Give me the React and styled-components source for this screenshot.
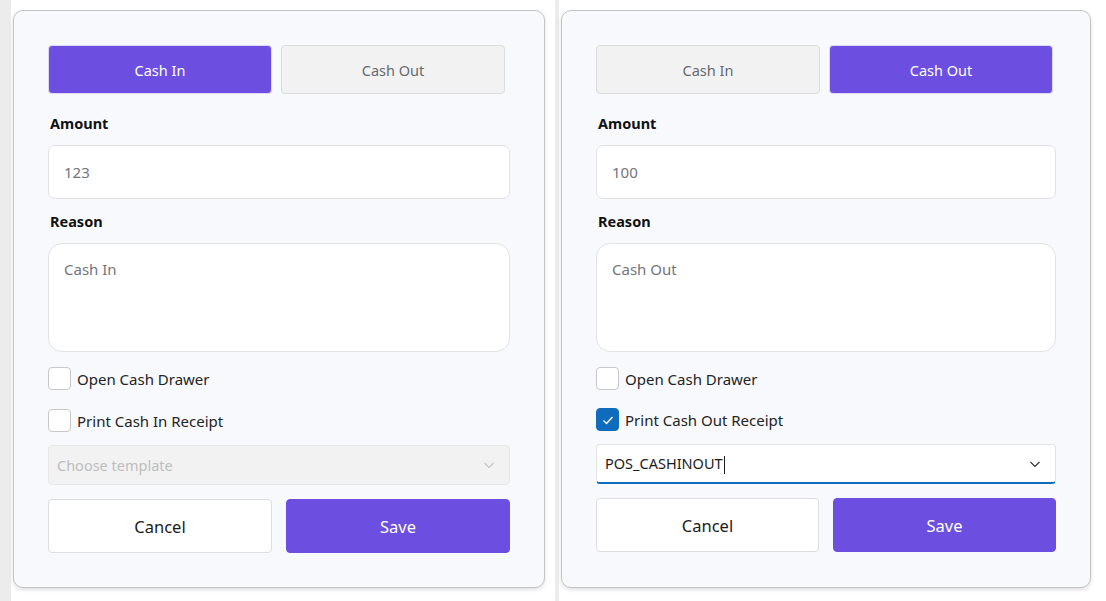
import styled, { createGlobalStyle } from 'styled-components';

const GlobalStyle = createGlobalStyle`
    html, body {
        margin: 0;
        padding: 0;
        background: #ffffff;
    }
    body {
        font-family: 'Noto Sans', 'Open Sans', sans-serif;
        color: #1b1b1b;
    }
`;

const Page = styled.div`
    display: flex;
    width: 1106px;
    height: 601px;
    overflow: hidden;
`;

// one captured window: a grey strip of the app behind, then the dialog
const Shot = styled.div`
    width: ${(props) => props.width}px;
    height: 601px;
    padding: 10px 0 0 ${(props) => props.inset}px;
    box-sizing: border-box;
    background: linear-gradient(
        to right,
        #ececec 0,
        #ececec ${(props) => props.inset - 2}px,
        #ffffff ${(props) => props.inset - 2}px
    );
`;

const Dialog = styled.div`
    width: ${(props) => props.width}px;
    height: 578px;
    box-sizing: border-box;
    padding: 34px 34px 0 34px;
    background: #f8f9fd;
    border: 1px solid #c4c4c4;
    border-radius: 10px;
    box-shadow: 0 2px 4px rgba(0, 0, 0, 0.12);
`;

const Toggles = styled.div`
    display: grid;
    grid-template-columns: 224px 224px;
    gap: 9px;
`;

const Toggle = styled.button`
    height: 49px;
    border-radius: 4px;
    font-family: inherit;
    font-size: 14.5px;
    border: 1px solid ${(props) => (props.active ? '#ddd8f5' : '#dcdcdc')};
    background: ${(props) => (props.active ? '#6c4fe0' : '#f2f2f3')};
    color: ${(props) => (props.active ? '#ffffff' : '#666a70')};
`;

const Label = styled.div`
    margin-top: ${(props) => props.top}px;
    padding-left: 2px;
    font-size: 14.5px;
    font-weight: 700;
    line-height: 20px;
    color: #111;
`;

const Field = styled.div`
    margin-top: 12px;
    height: ${(props) => props.height}px;
    box-sizing: border-box;
    padding: ${(props) => (props.multi ? '15px 15px' : '0 15px')};
    display: flex;
    align-items: ${(props) => (props.multi ? 'flex-start' : 'center')};
    background: #ffffff;
    border: 1px solid #e2e2e6;
    border-radius: ${(props) => (props.multi ? 14 : 7)}px;
    font-size: 15px;
    color: #74747c;
`;

const CheckRow = styled.label`
    margin-top: ${(props) => props.top}px;
    display: flex;
    align-items: center;
    gap: 6px;
    font-size: 15px;
    color: #242424;
`;

const Box = styled.span`
    width: 23px;
    height: 23px;
    box-sizing: border-box;
    border-radius: 4px;
    display: flex;
    align-items: center;
    justify-content: center;
    background: ${(props) => (props.checked ? '#0f6cbd' : '#ffffff')};
    border: 1px solid ${(props) => (props.checked ? '#0f6cbd' : '#c8c8c8')};
`;

const Select = styled.div`
    margin-top: 13px;
    height: 40px;
    box-sizing: border-box;
    padding: 0 14px 0 8px;
    display: flex;
    align-items: center;
    justify-content: space-between;
    border-radius: 4px;
    font-size: 14.5px;
    background: ${(props) => (props.disabled ? '#f2f2f2' : '#ffffff')};
    border: 1px solid ${(props) => (props.disabled ? '#e6e6e6' : '#e2e2e2')};
    border-bottom: ${(props) => (props.disabled ? '1px solid #e6e6e6' : '2px solid #0f6cbd')};
    color: ${(props) => (props.disabled ? '#bdbdbd' : '#1b1b1b')};
`;

const Caret = styled.span`
    display: inline-block;
    width: 1px;
    height: 18px;
    margin-left: 1px;
    background: #1b1b1b;
    vertical-align: middle;
`;

const Actions = styled.div`
    margin-top: 14px;
    display: grid;
    grid-template-columns: 1fr 1fr;
    gap: 14px;
`;

const ActionButton = styled.button`
    height: 54px;
    border-radius: 4px;
    font-family: inherit;
    font-size: 16.5px;
    border: 1px solid ${(props) => (props.primary ? '#6c4fe0' : '#dedede')};
    background: ${(props) => (props.primary ? '#6c4fe0' : '#ffffff')};
    color: ${(props) => (props.primary ? '#ffffff' : '#1b1b1b')};
`;

const Chevron = ({ color }) => (
    <svg width="12" height="12" viewBox="0 0 12 12" fill="none">
        <path d="M1.5 4l4.5 4.5L10.5 4" stroke={color} strokeWidth="1.2" />
    </svg>
);

const Check = () => (
    <svg width="14" height="14" viewBox="0 0 14 14" fill="none">
        <path d="M2.5 7.5l3 3 6-6.5" stroke="#ffffff" strokeWidth="1.4" />
    </svg>
);

const CashDialog = ({ mode, amount, template, width }) => {
    const isIn = mode === 'in';
    const label = isIn ? 'Cash In' : 'Cash Out';
    return (
        <Dialog width={width}>
            <Toggles>
                <Toggle active={isIn}>Cash In</Toggle>
                <Toggle active={!isIn}>Cash Out</Toggle>
            </Toggles>
            <Label top={19}>Amount</Label>
            <Field height={54}>{amount}</Field>
            <Label top={12}>Reason</Label>
            <Field height={109} multi>
                {label}
            </Field>
            <CheckRow top={15}>
                <Box />
                Open Cash Drawer
            </CheckRow>
            <CheckRow top={isIn ? 19 : 18}>
                <Box checked={!isIn}>{!isIn && <Check />}</Box>
                Print {label} Receipt
            </CheckRow>
            <Select disabled={!template}>
                <span>
                    {template || 'Choose template'}
                    {template && <Caret />}
                </span>
                <Chevron color={template ? '#333' : '#c4c4c4'} />
            </Select>
            <Actions>
                <ActionButton>Cancel</ActionButton>
                <ActionButton primary>Save</ActionButton>
            </Actions>
        </Dialog>
    );
};

const App = () => (
    <Page>
        <GlobalStyle />
        <Shot width={555} inset={13}>
            <CashDialog mode="in" amount="123" width={532} />
        </Shot>
        <Shot width={551} inset={6}>
            <CashDialog mode="out" amount="100" template="POS_CASHINOUT" width={530} />
        </Shot>
    </Page>
);

export default App;
